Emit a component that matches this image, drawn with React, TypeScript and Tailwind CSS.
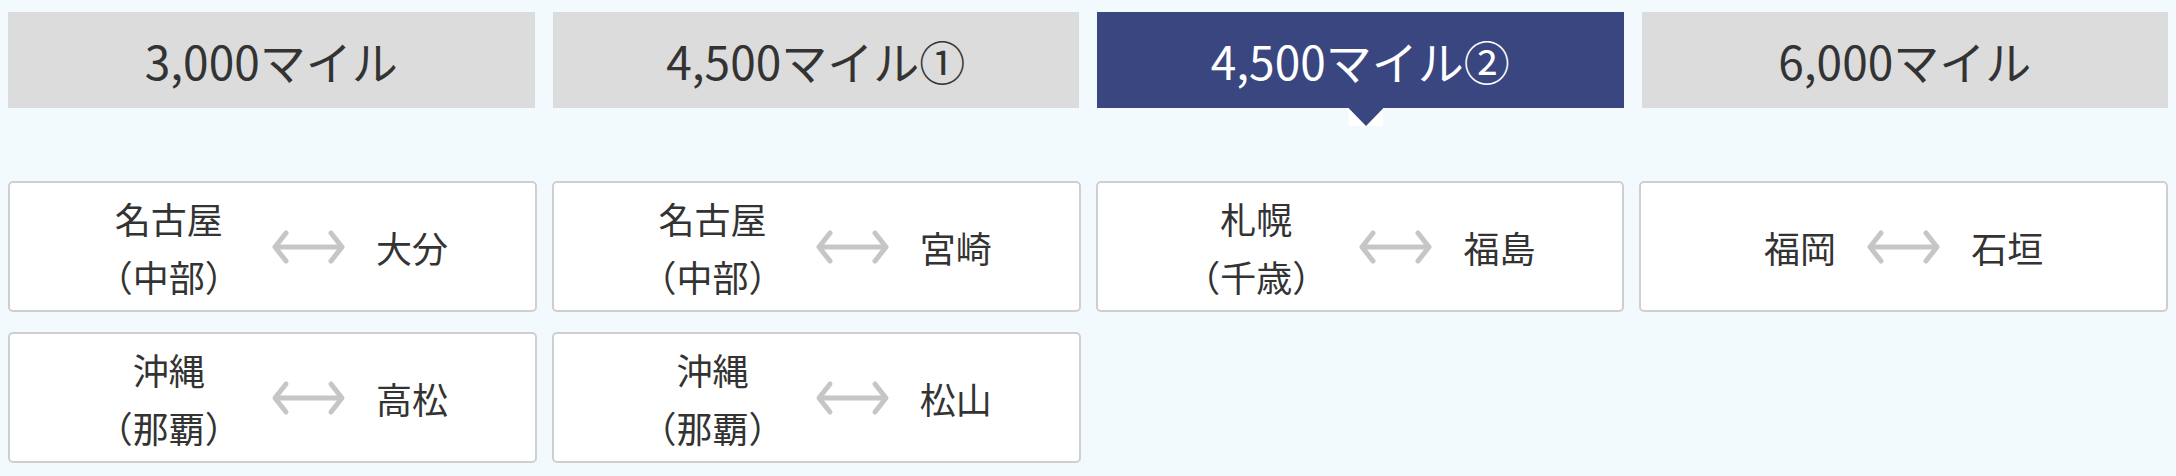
import React from "react";

const tabs = ["3,000マイル", "4,500マイル①", "4,500マイル②", "6,000マイル"];

type Route = { from: string[]; to: string };
const columns: Route[][] = [
  [
    { from: ["名古屋", "（中部）"], to: "大分" },
    { from: ["沖縄", "（那覇）"], to: "高松" },
  ],
  [
    { from: ["名古屋", "（中部）"], to: "宮崎" },
    { from: ["沖縄", "（那覇）"], to: "松山" },
  ],
  [{ from: ["札幌", "（千歳）"], to: "福島" }],
  [{ from: ["福岡"], to: "石垣" }],
];

function Arrow() {
  return (
    <svg width="75" height="36" viewBox="0 0 75 36" className="mx-[30px] shrink-0">
      <g fill="none" stroke="#c6c6c6" strokeWidth="5" strokeLinecap="round" strokeLinejoin="round">
        <path d="M5 18 H70" />
        <path d="M15 4 L4 18 L15 32" />
        <path d="M60 4 L71 18 L60 32" />
      </g>
    </svg>
  );
}

function Card({ r }: { r: Route }) {
  return (
    <div className="h-[131px] bg-white border-2 border-[#cfcfcf] rounded-[5px] flex items-center justify-center text-[36px] leading-[58px] text-[#333]">
      <div className="text-center">
        {r.from.map((l, i) => (
          <div key={i}>{l}</div>
        ))}
      </div>
      <Arrow />
      <div>{r.to}</div>
    </div>
  );
}

export default function App() {
  return (
    <div
      className="bg-[#f3fafd] w-full min-h-[476px] px-2 pt-3 pb-[13px]"
      style={{ fontFamily: '"Noto Sans CJK JP", "Noto Sans", sans-serif' }}
    >
      <div className="grid grid-cols-4 gap-[18px]">
        {tabs.map((t, i) => {
          const active = i === 2;
          return (
            <div
              key={t}
              className={
                active
                  ? "relative h-[96px] bg-[#3a4680] text-white flex items-center justify-center text-[46px]"
                  : "relative h-[96px] bg-[#dcdcdc] text-[#333] flex items-center justify-center text-[46px]"
              }
            >
              {t}
              {active && (
                <svg
                  width="35"
                  height="18"
                  viewBox="0 0 35 18"
                  className="absolute top-full left-1/2 -translate-x-1/2 ml-[6px]"
                >
                  <rect width="35" height="18" fill="#ffffff" />
                  <polygon points="0,0 35,0 17.5,18" fill="#3a4680" />
                </svg>
              )}
            </div>
          );
        })}
      </div>
      <div className="grid grid-cols-4 gap-x-[15px] mt-[73px] items-start">
        {columns.map((col, ci) => (
          <div key={ci} className="flex flex-col gap-[20px]">
            {col.map((r, ri) => (
              <Card key={ri} r={r} />
            ))}
          </div>
        ))}
      </div>
    </div>
  );
}
